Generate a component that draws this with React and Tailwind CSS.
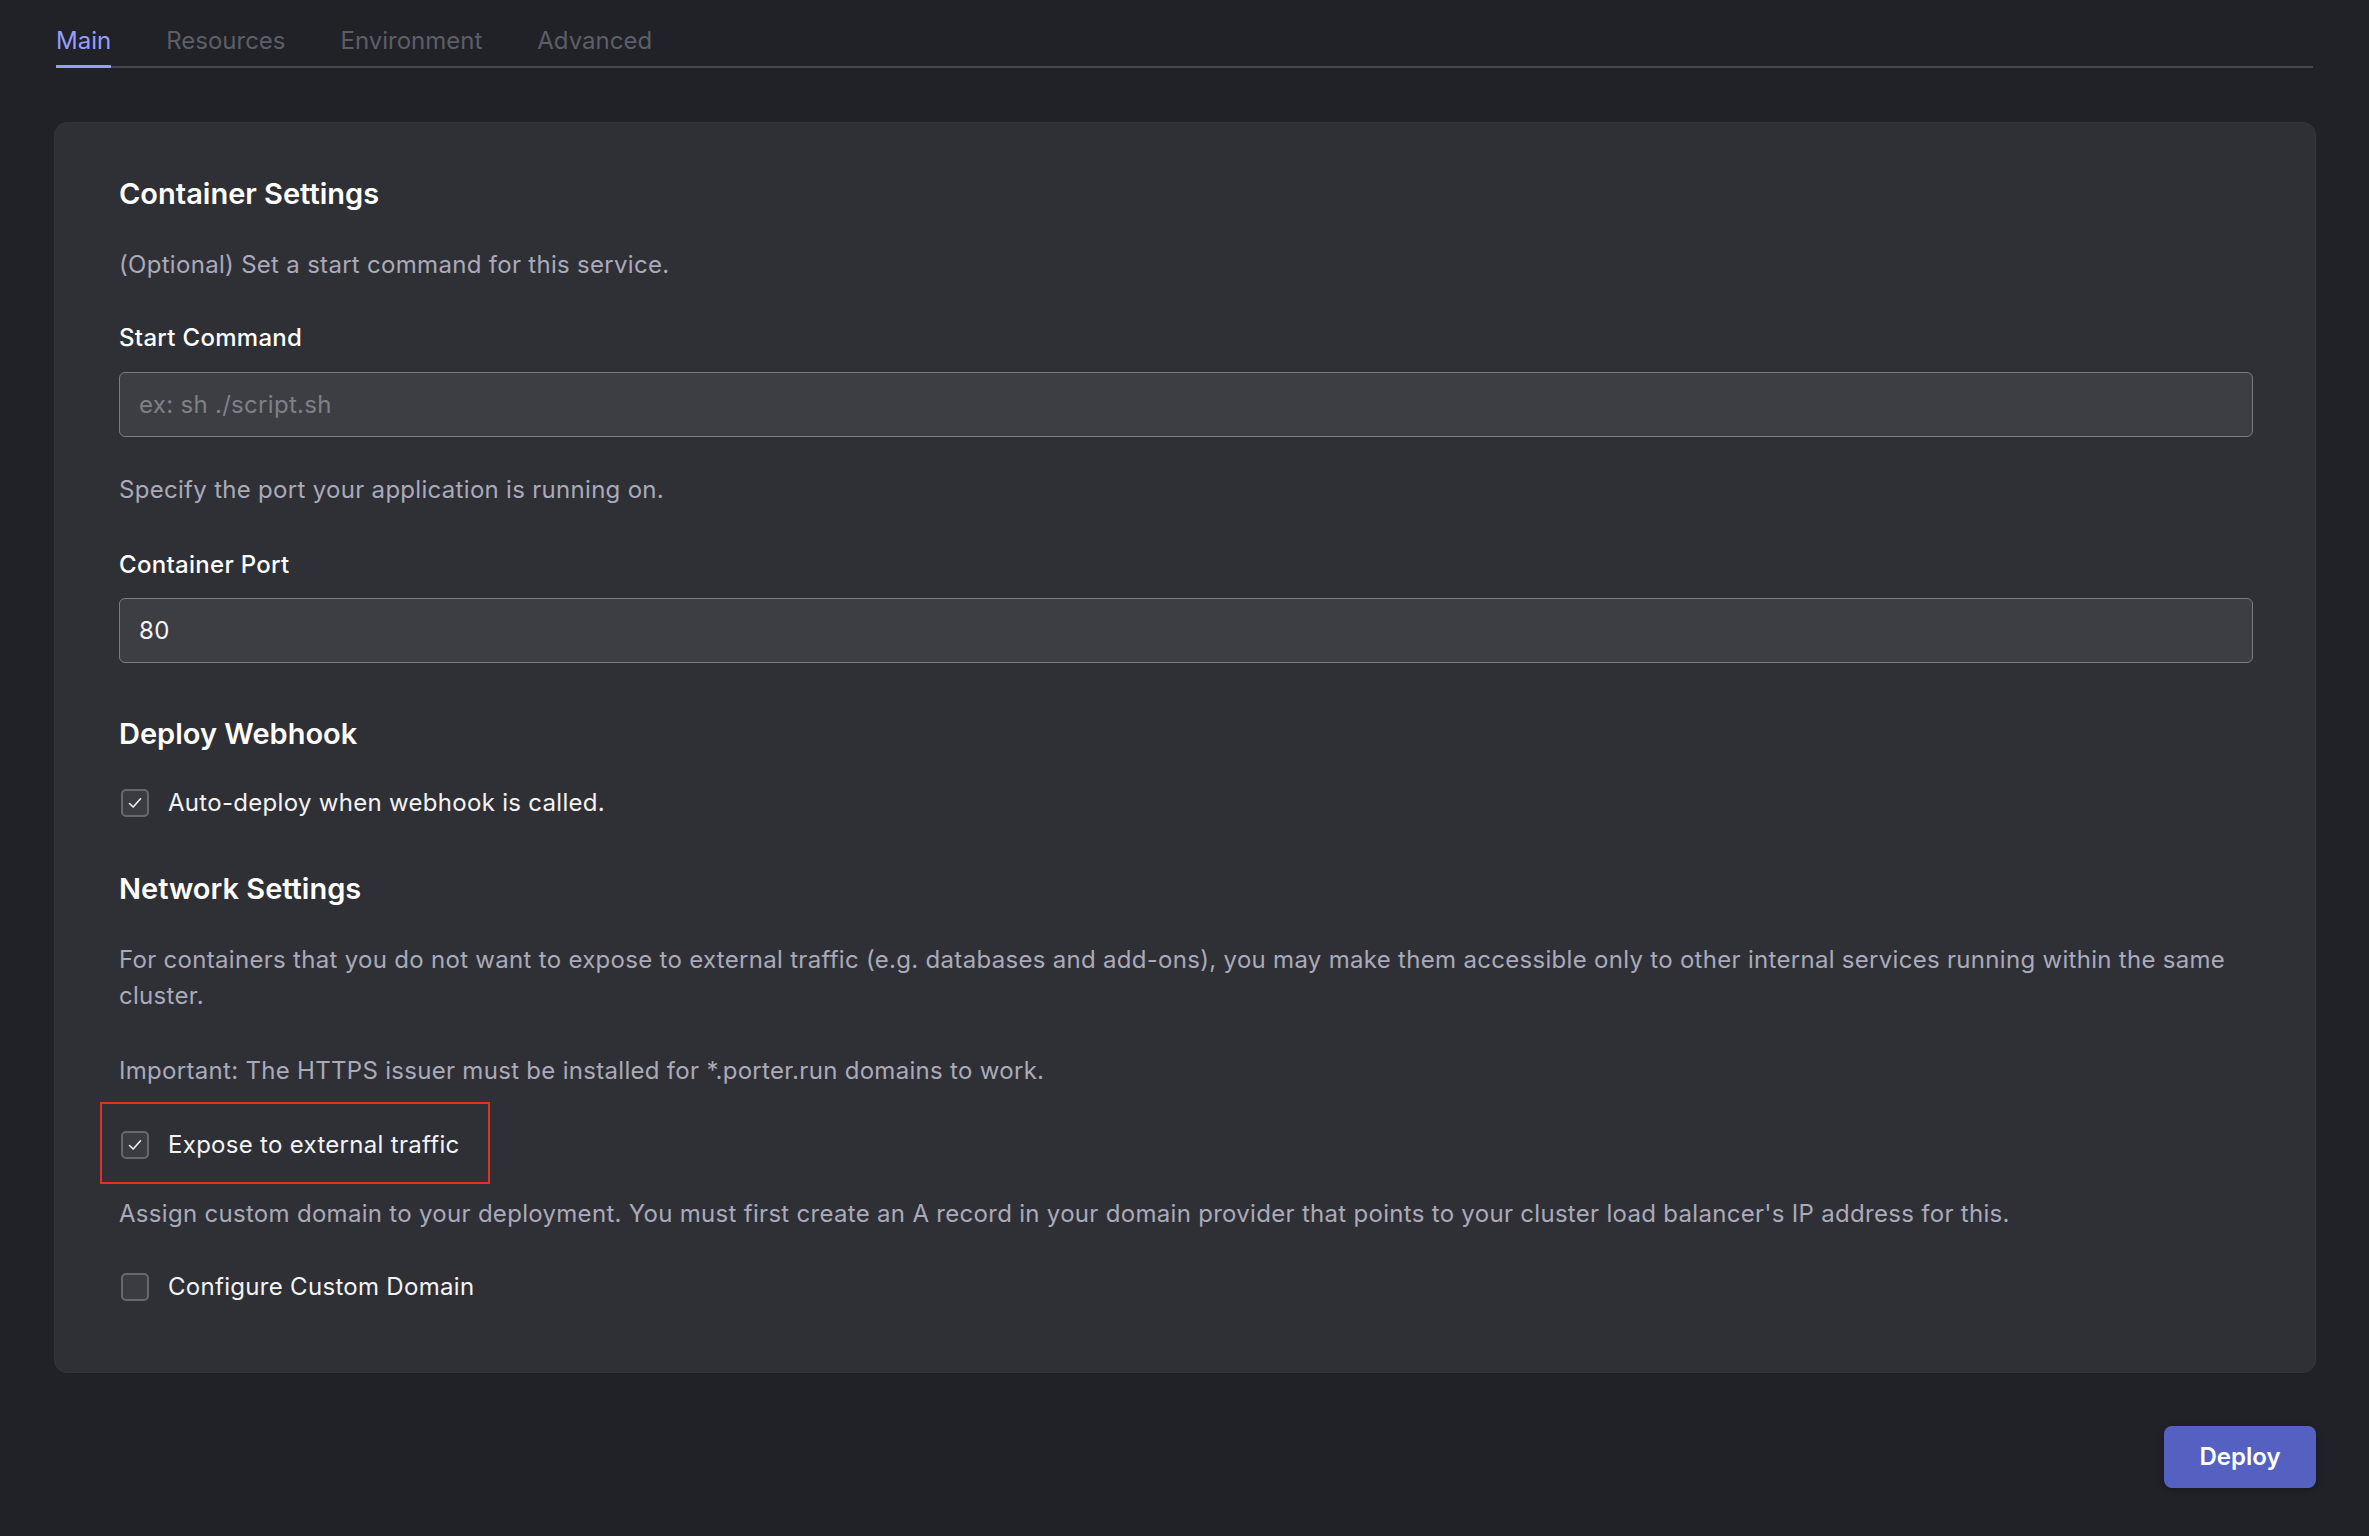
import React from 'react';

const font = { fontFamily: 'Inter, "Open Sans", sans-serif' };

function Check({ checked }) {
  return (
    <span className="w-[28px] h-[28px] shrink-0 rounded-[5px] border-2 border-[#67686e] bg-[#3b3c42] flex items-center justify-center">
      {checked && (
        <svg width="16" height="16" viewBox="0 0 16 16" fill="none">
          <path d="M2.5 8.5 L6.2 12 L13.5 3.8" stroke="#f2f2f4" strokeWidth="1.6" strokeLinecap="round" strokeLinejoin="round" />
        </svg>
      )}
    </span>
  );
}

function CheckRow({ checked, label, className = '' }) {
  return (
    <div className={`flex items-center gap-[19px] h-[36px] pl-[2px] ${className}`}>
      <Check checked={checked} />
      <span className="text-[24px] leading-[36px] tracking-[0.3px] text-[#f4f4f6]">{label}</span>
    </div>
  );
}

export default function App() {
  const tabs = ['Main', 'Resources', 'Environment', 'Advanced'];

  return (
    <div className="min-h-screen w-full bg-[#202227] pl-[54px] pr-[53px] pb-[48px] antialiased" style={font}>
      {/* tabs */}
      <div className="flex gap-[55px] border-b-2 border-[#45464f] ml-[2px] mr-[3px]">
        {tabs.map((t, i) => (
          <div
            key={t}
            className={`pt-[26px] pb-[9px] text-[24px] leading-[30px] border-b-[3px] -mb-[2px] ${
              i === 0 ? 'text-[#949eff] border-[#949eff]' : 'text-[#5d5e67] border-transparent'
            }`}
          >
            {t}
          </div>
        ))}
      </div>

      {/* settings card */}
      <div className="mt-[54px] rounded-[13px] bg-[#2f3035] border border-[#34353a] pt-[53px] pb-[67px] pl-[64px] pr-[62px] flex flex-col tracking-[0.3px]">
        <h2 className="text-[29px] leading-[36px] font-semibold text-white tracking-normal">Container Settings</h2>
        <p className="mt-[35px] text-[24px] leading-[36px] text-[#aaaabb]">(Optional) Set a start command for this service.</p>

        <label className="mt-[37px] text-[24px] leading-[36px] font-medium text-white">Start Command</label>
        <div className="mt-[16px] h-[65px] rounded-[6px] border border-[#7c7d82] bg-[#3d3e43] flex items-center px-[19px]">
          <span className="text-[24px] text-[#7f8087]">ex: sh ./script.sh</span>
        </div>

        <p className="mt-[35px] text-[24px] leading-[36px] text-[#aaaabb]">Specify the port your application is running on.</p>

        <label className="mt-[39px] text-[24px] leading-[36px] font-medium text-white">Container Port</label>
        <div className="mt-[15px] h-[65px] rounded-[6px] border border-[#7c7d82] bg-[#3d3e43] flex items-center px-[19px]">
          <span className="text-[24px] text-[#f4f4f6]">80</span>
        </div>

        <h2 className="mt-[53px] text-[29px] leading-[36px] font-semibold text-white tracking-normal">Deploy Webhook</h2>
        <CheckRow className="mt-[33px]" checked label="Auto-deploy when webhook is called." />

        <h2 className="mt-[50px] text-[29px] leading-[36px] font-semibold text-white tracking-normal">Network Settings</h2>
        <p className="mt-[35px] text-[24px] leading-[36px] text-[#aaaabb]">
          For containers that you do not want to expose to external traffic (e.g. databases and add-ons), you may make them accessible only to other internal services running within the same cluster.
        </p>
        <p className="mt-[39px] text-[24px] leading-[36px] text-[#aaaabb]">
          Important: The HTTPS issuer must be installed for *.porter.run domains to work.
        </p>

        <div className="relative mt-[38px]">
          <CheckRow checked label="Expose to external traffic" />
          <span className="absolute -left-[19px] -top-[25px] w-[390px] h-[82px] border-2 border-[#e2321f] pointer-events-none" />
        </div>

        <p className="mt-[33px] text-[24px] leading-[36px] text-[#aaaabb]">
          Assign custom domain to your deployment. You must first create an A record in your domain provider that points to your cluster load balancer's IP address for this.
        </p>
        <CheckRow className="mt-[37px]" label="Configure Custom Domain" />
      </div>

      <div className="flex justify-end mt-[53px]">
        <button className="w-[152px] h-[62px] rounded-[8px] bg-[#5561c0] text-white text-[24px] font-semibold shadow-[0_2px_6px_rgba(0,0,0,0.3)]">
          Deploy
        </button>
      </div>
    </div>
  );
}
